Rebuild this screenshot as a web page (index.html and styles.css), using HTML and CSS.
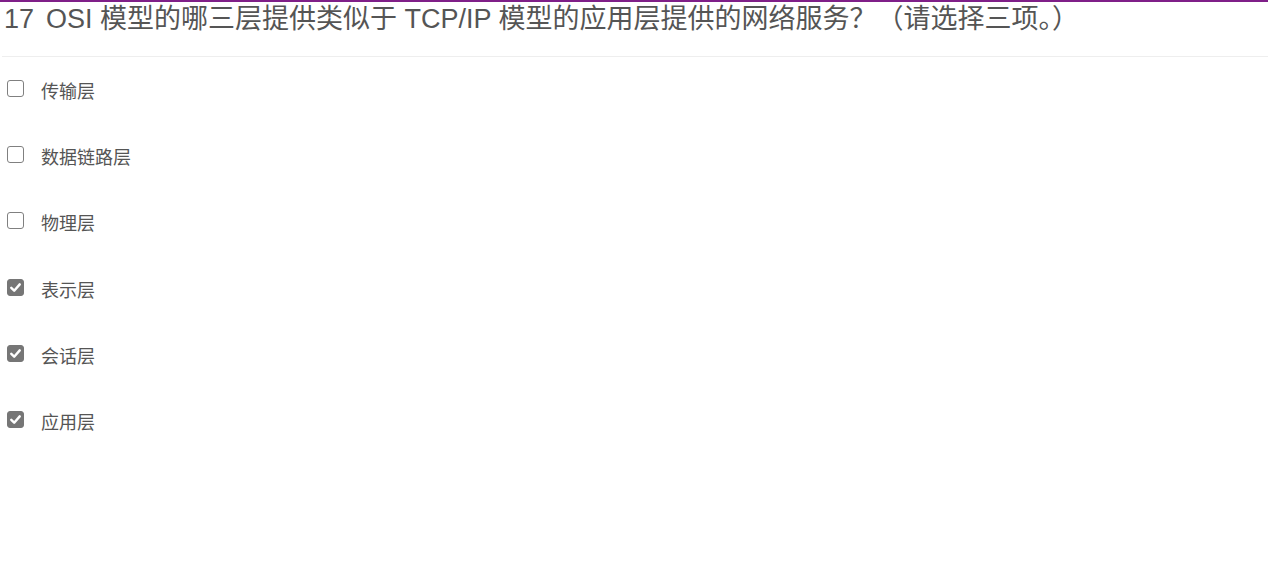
FILE: index.html
```html
<!DOCTYPE html>
<html lang="zh-CN">
<head>
<meta charset="utf-8">
<title>Question 17</title>
<link rel="stylesheet" href="styles.css">
</head>
<body>
<div class="topbar"></div>
<div class="question">
  <h2 class="title"><span class="num">17</span>OSI 模型的哪三层提供类似于 TCP/IP 模型的应用层提供的网络服务？（请选择三项。）</h2>
  <ul class="options">
    <li class="option"><span class="box"></span><span class="label">传输层</span></li>
    <li class="option"><span class="box"></span><span class="label">数据链路层</span></li>
    <li class="option"><span class="box"></span><span class="label">物理层</span></li>
    <li class="option"><span class="box checked"><svg viewBox="0 0 16 16" width="16" height="16"><path d="M3.5 8.4 L6.6 11.4 L12.5 4.7" fill="none" stroke="#fff" stroke-width="2.6" stroke-linecap="round" stroke-linejoin="round"/></svg></span><span class="label">表示层</span></li>
    <li class="option"><span class="box checked"><svg viewBox="0 0 16 16" width="16" height="16"><path d="M3.5 8.4 L6.6 11.4 L12.5 4.7" fill="none" stroke="#fff" stroke-width="2.6" stroke-linecap="round" stroke-linejoin="round"/></svg></span><span class="label">会话层</span></li>
    <li class="option"><span class="box checked"><svg viewBox="0 0 16 16" width="16" height="16"><path d="M3.5 8.4 L6.6 11.4 L12.5 4.7" fill="none" stroke="#fff" stroke-width="2.6" stroke-linecap="round" stroke-linejoin="round"/></svg></span><span class="label">应用层</span></li>
  </ul>
</div>
</body>
</html>
```
FILE: styles.css
```css
html, body {
  margin: 0;
  padding: 0;
  background: #fff;
}
body {
  font-family: "Liberation Sans", Arial, "Noto Sans CJK SC", sans-serif;
  color: #555;
}
.topbar {
  height: 2px;
  background: #7f1f88;
}
.title {
  margin: 0 0 0 2px;
  padding: 0 0 0 2px;
  height: 54px;
  font-size: 27px;
  font-weight: normal;
  line-height: 34px;
  color: #555;
  border-bottom: 1px solid #eee;
  white-space: nowrap;
}
.num {
  margin-right: 12px;
}
.options {
  list-style: none;
  margin: 0;
  padding: 23px 0 0 7px;
  display: flex;
  flex-direction: column;
}
.option {
  display: flex;
  align-items: flex-start;
  height: 66.2px;
}
.box {
  box-sizing: border-box;
  width: 17px;
  height: 17px;
  border: 1.5px solid #808080;
  border-radius: 3px;
  background: #fff;
  display: flex;
  align-items: center;
  justify-content: center;
  flex-shrink: 0;
}
.box.checked {
  background: #767676;
  border-color: #767676;
}
.box svg {
  display: block;
  width: 15px;
  height: 15px;
}
.label {
  margin-left: 17px;
  margin-top: 2px;
  font-size: 18px;
  line-height: 20px;
  color: #555;
}
```
